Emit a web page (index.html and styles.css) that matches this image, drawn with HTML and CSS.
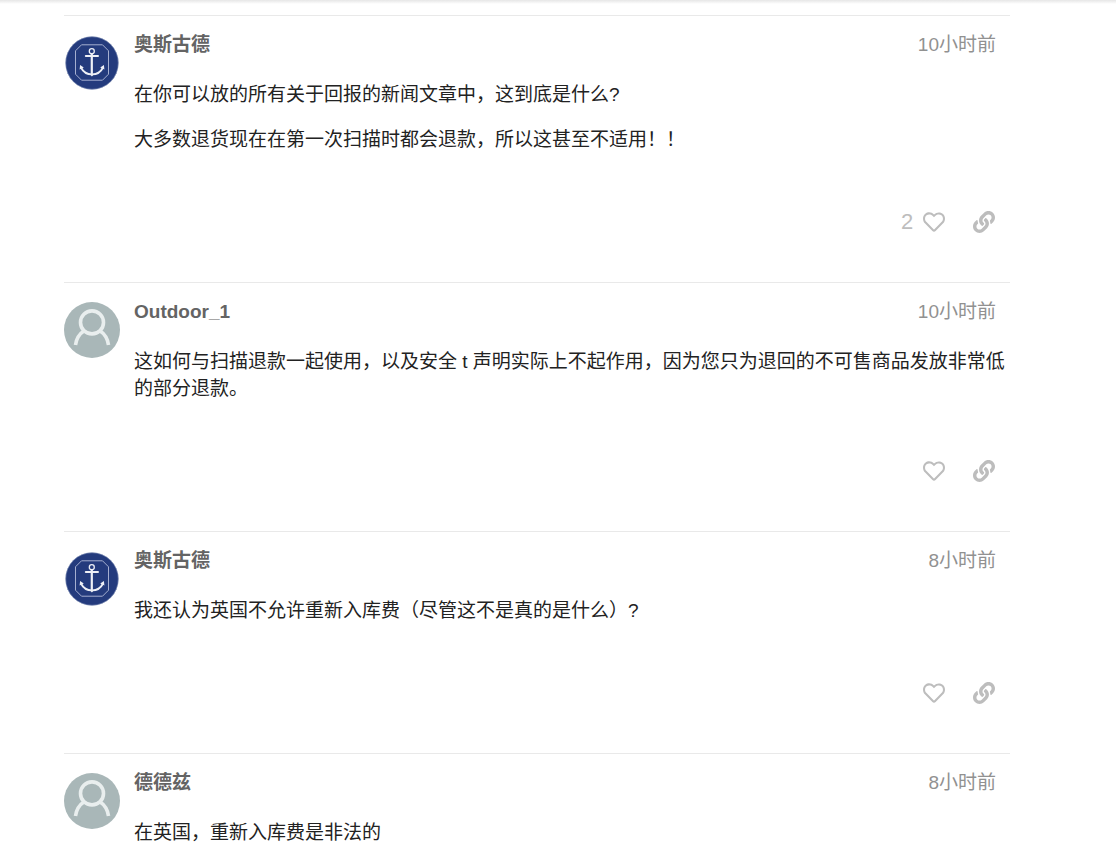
FILE: index.html
```html
<!DOCTYPE html>
<html lang="zh-CN">
<head>
  <meta charset="UTF-8" />
  <meta name="viewport" content="width=device-width, initial-scale=1.0"/>
  <title>论坛</title>
  <link rel="stylesheet" href="styles.css">
</head>
<body>
  <svg class="sprite" aria-hidden="true">
    <symbol id="icon-heart" viewBox="0 0 512 512">
      <path d="M458.4 64.3C400.6 15.7 311.3 23 256 79.3 200.7 23 111.4 15.6 53.6 64.3-21.6 127.6-10.6 230.8 43 285.5l175.4 178.7c10 10.2 23.4 15.9 37.6 15.9 14.3 0 27.6-5.6 37.6-15.8L469 285.6c53.5-54.7 64.7-157.9-10.6-221.3zm-23.6 187.5L259.4 430.5c-2.4 2.4-4.4 2.4-6.8 0L77.2 251.8c-36.5-37.2-43.9-107.6 7.3-150.7 38.9-32.7 98.9-27.8 136.5 10.5l35 35.7 35-35.7c37.8-38.5 97.8-43.2 136.5-10.6 51.1 43.1 43.5 113.9 7.3 150.8z"/>
    </symbol>
    <symbol id="icon-link" viewBox="0 0 512 512">
      <path d="M326.612 185.391c59.747 59.809 58.927 155.698.36 214.59-.11.12-.24.25-.36.37l-67.2 67.2c-59.27 59.27-155.699 59.262-214.96 0-59.27-59.26-59.27-155.7 0-214.96l37.106-37.106c9.84-9.84 26.786-3.3 27.294 10.606.648 17.722 3.826 35.527 9.69 52.721 1.986 5.822.567 12.262-3.783 16.612l-13.087 13.087c-28.026 28.026-28.905 73.66-1.155 101.96 28.024 28.579 74.086 28.749 102.325.51l67.2-67.19c28.191-28.191 28.073-73.757 0-101.83-3.701-3.694-7.429-6.564-10.341-8.569a16.037 16.037 0 0 1-6.947-12.606c-.396-10.567 3.348-21.456 11.698-29.806l21.054-21.055c5.521-5.521 14.182-6.199 20.584-1.731a152.482 152.482 0 0 1 20.522 17.197zM467.547 44.449c-59.261-59.262-155.69-59.27-214.96 0l-67.2 67.2c-.12.12-.25.25-.36.37-58.566 58.892-59.387 154.781.36 214.59a152.454 152.454 0 0 0 20.521 17.196c6.402 4.468 15.064 3.789 20.584-1.731l21.054-21.055c8.35-8.35 12.094-19.239 11.698-29.806a16.037 16.037 0 0 0-6.947-12.606c-2.912-2.005-6.64-4.875-10.341-8.569-28.073-28.073-28.191-73.639 0-101.83l67.2-67.19c28.239-28.239 74.3-28.069 102.325.51 27.75 28.3 26.872 73.934-1.155 101.96l-13.087 13.087c-4.35 4.35-5.769 10.79-3.783 16.612 5.864 17.194 9.042 34.999 9.69 52.721.509 13.906 17.454 20.446 27.294 10.606l37.106-37.106c59.271-59.259 59.271-155.699.001-214.959z"/>
    </symbol>
    <symbol id="avatar-anchor" viewBox="0 0 56 56">
      <circle cx="28" cy="28" r="26.5" fill="#243b7d"/>
      <circle cx="28" cy="28" r="26.3" fill="none" stroke="#a3aecb" stroke-width="0.5"/>
      <path d="M17.5 9.8h21l6 6v23.4l-6 6h-21l-6-6v-23.400z" fill="none" stroke="#a5afd0" stroke-width="1"/>
      <g fill="none" stroke="#eef0f6" stroke-linecap="round">
        <circle cx="27.800" cy="16.200" r="2.500" stroke-width="1.300"/>
        <path d="M27.800 19v19.500" stroke-width="2.200"/>
        <path d="M21.800 21h12.200" stroke-width="2"/>
        <path d="M17.300 33c2 4.200 6 6.300 10.700 6.300s8.700-2.100 10.700-6.300" stroke-width="1.800"/>
      </g>
      <path d="M15.600 34.500l.5-4.400 3.700 2.500zM40.400 34.500l-.5-4.400-3.700 2.500zM25.600 39h4.600l-2.300 2.500z" fill="#eef0f6"/>
    </symbol>
    <symbol id="avatar-user" viewBox="0 0 56 56">
      <circle cx="28" cy="28" r="28" fill="#a9b7b8"/>
      <g fill="none" stroke="#e9eeee" stroke-width="3.600">
        <circle cx="28" cy="20.400" r="11.500"/>
        <path d="M11.500 43c.8-6 4-11.300 9-14.500M44.500 43c-.8-6-4-11.300-9-14.500"/>
      </g>
    </symbol>
  </svg>

  <div class="header-shadow"></div>

  <main class="posts">
    <article class="post">
      <svg class="avatar" aria-hidden="true"><use href="#avatar-anchor"/></svg>
      <div class="post-body">
        <div class="post-meta">
          <a class="username" href="#">奥斯古德</a>
          <a class="post-date" href="#">10小时前</a>
        </div>
        <div class="post-text">
          <p>在你可以放的所有关于回报的新闻文章中，这到底是什么?</p>
          <p>大多数退货现在在第一次扫描时都会退款，所以这甚至不适用！！</p>
        </div>
        <div class="post-actions">
          <button class="like-count" type="button">2</button>
          <button type="button" aria-label="赞"><svg class="icon"><use href="#icon-heart"/></svg></button>
          <button type="button" aria-label="链接"><svg class="icon"><use href="#icon-link"/></svg></button>
        </div>
      </div>
    </article>

    <article class="post">
      <svg class="avatar" aria-hidden="true"><use href="#avatar-user"/></svg>
      <div class="post-body">
        <div class="post-meta">
          <a class="username" href="#">Outdoor_1</a>
          <a class="post-date" href="#">10小时前</a>
        </div>
        <div class="post-text">
          <p>这如何与扫描退款一起使用，以及安全 t 声明实际上不起作用，因为您只为退回的不可售商品发放非常低的部分退款。</p>
        </div>
        <div class="post-actions">
          <button type="button" aria-label="赞"><svg class="icon"><use href="#icon-heart"/></svg></button>
          <button type="button" aria-label="链接"><svg class="icon"><use href="#icon-link"/></svg></button>
        </div>
      </div>
    </article>

    <article class="post">
      <svg class="avatar" aria-hidden="true"><use href="#avatar-anchor"/></svg>
      <div class="post-body">
        <div class="post-meta">
          <a class="username" href="#">奥斯古德</a>
          <a class="post-date" href="#">8小时前</a>
        </div>
        <div class="post-text">
          <p>我还认为英国不允许重新入库费（尽管这不是真的是什么）?</p>
        </div>
        <div class="post-actions">
          <button type="button" aria-label="赞"><svg class="icon"><use href="#icon-heart"/></svg></button>
          <button type="button" aria-label="链接"><svg class="icon"><use href="#icon-link"/></svg></button>
        </div>
      </div>
    </article>

    <article class="post">
      <svg class="avatar" aria-hidden="true"><use href="#avatar-user"/></svg>
      <div class="post-body">
        <div class="post-meta">
          <a class="username" href="#">德德兹</a>
          <a class="post-date" href="#">8小时前</a>
        </div>
        <div class="post-text">
          <p>在英国，重新入库费是非法的</p>
        </div>
      </div>
    </article>
  </main>
</body>
</html>
```

FILE: styles.css
```css
body {
  margin: 0;
  background: #fff;
  color: #222;
  font-family: "Liberation Sans", "Noto Sans CJK SC", sans-serif;
  font-size: 19px;
  line-height: 27px;
}

a {
  text-decoration: none;
}

.sprite {
  display: none;
}

.header-shadow {
  height: 4px;
  background: linear-gradient(#e6e6e6, #fff);
}

.posts {
  margin: 11px 106px 0 64px;
}

.post {
  display: flex;
  gap: 14px;
  border-top: 1px solid #e9e9e9;
}

.avatar {
  flex: none;
  width: 56px;
  height: 56px;
  margin-top: 19px;
}

.post-body {
  flex: 1;
  min-width: 0;
  padding-top: 15px;
}

.post-meta {
  display: flex;
  justify-content: space-between;
  height: 27px;
  margin-bottom: 23px;
  padding-right: 14px;
}

.username {
  color: #646464;
  font-weight: bold;
}

.post-date {
  color: #919191;
}

.post-text p {
  margin: 0 0 18px;
}

.post-text p:last-child {
  margin-bottom: 0;
}

.post-actions {
  display: flex;
  justify-content: flex-end;
  margin: 45px 1px 36px 0;
}

.post-actions button {
  display: flex;
  align-items: center;
  justify-content: center;
  width: 50px;
  height: 48px;
  padding: 0;
  border: none;
  background: none;
  color: #bdbdbd;
  font-family: inherit;
  font-size: 22px;
  cursor: pointer;
}

.post-actions button:hover {
  color: #646464;
}

.post-actions .like-count {
  width: 12px;
  margin-right: -4px;
}

.icon {
  width: 22px;
  height: 22px;
  fill: currentColor;
}
```
